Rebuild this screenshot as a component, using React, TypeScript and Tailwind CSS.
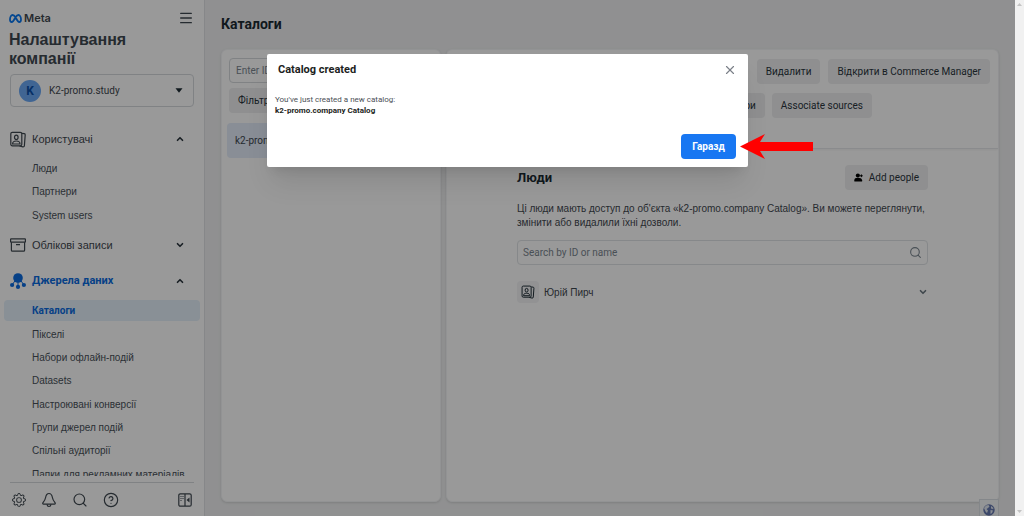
import { useState } from "react";
import type { ReactNode } from "react";
import { BsGear } from "react-icons/bs";
import { ChevronDown, ChevronUp, CircleHelp, Menu, Search, X } from "lucide-react";

interface NavItem {
  label: string;
  active?: boolean;
}

const userItems: NavItem[] = [
  { label: "Люди" },
  { label: "Партнери" },
  { label: "System users" },
];

const dataSourceItems: NavItem[] = [
  { label: "Каталоги", active: true },
  { label: "Пікселі" },
  { label: "Набори офлайн-подій" },
  { label: "Datasets" },
  { label: "Настроювані конверсії" },
  { label: "Групи джерел подій" },
  { label: "Спільні аудиторії" },
  { label: "Папки для рекламних матеріалів" },
];

function MetaLogo() {
  return (
    <svg viewBox="0 0 26 18" className="h-[9px] w-[13px]" fill="none" aria-hidden="true">
      <path
        d="M13 6.5C11 3.5 9.3 2 7.3 2 4.2 2 2 6.6 2 11c0 3 1.200 5 3.400 5 2.300 0 3.900-2.200 7.600-9.500C15 3.500 16.700 2 18.700 2 21.800 2 24 6.600 24 11c0 3-1.200 5-3.400 5-2.300 0-3.900-2.200-7.600-9.500Z"
        stroke="#0a78f0"
        strokeWidth="3.6"
        strokeLinejoin="round"
      />
    </svg>
  );
}

function PeopleCardsIcon({ className }: { className: string }) {
  return (
    <svg viewBox="0 0 16 17" className={className} fill="none" stroke="currentColor" strokeWidth="1.2" aria-hidden="true">
      <rect x="0.8" y="1.300" width="11" height="13.500" rx="1.500" />
      <path d="M12 2.300l2.200.3a1.200 1.200 0 0 1 1 1.300l-.8 10.800a1.300 1.300 0 0 1-1.500 1.200L9.500 15" />
      <ellipse cx="6.300" cy="6.300" rx="1.800" ry="2.200" />
      <path d="M2.600 13c0-2.200 1.200-3 3.700-3s3.700.8 3.700 3Z" />
    </svg>
  );
}

function ArchiveIcon() {
  return (
    <svg viewBox="0 0 16 14" className="h-3.5 w-4" fill="none" stroke="currentColor" strokeWidth="1.2" aria-hidden="true">
      <rect x="0.6" y="0.8" width="14.800" height="3.400" rx="0.500" />
      <path d="M1.400 4.200v8a1 1 0 0 0 1 1h11.200a1 1 0 0 0 1-1v-8M6 6.700h4" />
    </svg>
  );
}

function ClusterIcon() {
  return (
    <svg viewBox="0 0 16 16" className="size-4" fill="currentColor" aria-hidden="true">
      <circle cx="8" cy="5" r="4.800" />
      <circle cx="2.100" cy="12" r="2.100" />
      <circle cx="8" cy="13.900" r="2.100" />
      <circle cx="13.900" cy="12" r="2.100" />
      <path d="M5.500 7 2.100 12M8 8v6M10.500 7l3.400 5" fill="none" stroke="currentColor" strokeWidth="1" />
    </svg>
  );
}

function BellIcon() {
  return (
    <svg viewBox="0 0 16 16" className="size-4" fill="none" stroke="currentColor" strokeWidth="1.200" strokeLinejoin="round" aria-hidden="true">
      <path d="M8 1.500c-2 0-3 1.700-3.400 4-.4 2.500-1.300 3.600-2.600 5.200-.6.800-.2 1.500.6 1.500h10.800c.8 0 1.200-.7.600-1.500-1.300-1.600-2.200-2.700-2.600-5.200-.4-2.300-1.400-4-3.400-4Z" />
      <path d="M6 12.400c.2 1.500.9 2.100 2 2.100s1.800-.6 2-2.100" />
    </svg>
  );
}

function PanelIcon() {
  return (
    <svg viewBox="0 0 14 14" className="size-3.5" fill="none" stroke="currentColor" strokeWidth="1.200" aria-hidden="true">
      <rect x="0.800" y="0.800" width="12.400" height="12.400" rx="1.500" />
      <path d="M7 1v12M2.500 3.500h1M4.500 3.500h1M2.500 5.500h1M4.500 5.500h1M2.500 7.500h1" />
      <path d="M11.500 4.500v5L8.500 7Z" fill="currentColor" stroke="none" />
    </svg>
  );
}

function AddPersonIcon() {
  return (
    <svg viewBox="0 0 10 10" className="size-[9px]" fill="#000" aria-hidden="true">
      <circle cx="4.300" cy="2.800" r="2.300" />
      <path d="M.4 9.500V8c0-1.700 1.300-2.600 3.900-2.600S8.600 6.300 9 8v1.500Z" />
      <path d="M8.200 1.600v3M6.700 3.100h3" stroke="#000" strokeWidth="1.100" />
    </svg>
  );
}

function GlobeIcon() {
  return (
    <svg viewBox="0 0 12 12" className="size-3" aria-hidden="true">
      <circle cx="6" cy="6" r="5.700" fill="#6478b0" />
      <path d="M1 4 3 1.500 5.500 1l1 1.500L5 4 3.500 5 5 6.500 4 9 2.500 7.500ZM8 2l2.500 2-.5 1-2-.5ZM7.500 6l2.500.5-1 2.500L7.500 10Z" fill="#e3e9f2" />
    </svg>
  );
}

function NavList({ items, className }: { items: NavItem[]; className: string }) {
  return (
    <ul className={`grid auto-rows-fr ${className}`}>
      {items.map((item) => (
        <li key={item.label} className="flex">
          <a
            href="#"
            className={`my-px flex flex-1 items-center rounded pl-7 text-[10px] ${
              item.active
                ? "bg-[#e4f0fb] font-[Roboto,sans-serif] font-bold text-[#0a6be0]"
                : "font-['Liberation_Sans',sans-serif] text-[#495159]"
            }`}
          >
            {item.label}
          </a>
        </li>
      ))}
    </ul>
  );
}

interface SectionProps {
  icon: ReactNode;
  label: string;
  open?: boolean;
  active?: boolean;
}

function SectionButton({ icon, label, open, active }: SectionProps) {
  const Chevron = open ? ChevronUp : ChevronDown;
  return (
    <button
      type="button"
      aria-expanded={!!open}
      className={`flex h-6 w-full shrink-0 items-center gap-1.5 pr-[15px] pl-1.5 text-left ${
        active
          ? "text-[11px] font-bold text-[#0a6be0]"
          : "font-['Liberation_Sans',sans-serif] text-[11px] text-[#3f4850]"
      }`}
    >
      {icon}
      <span className="flex-1">{label}</span>
      <Chevron className="size-2.5 text-[#2b353d]" strokeWidth={4} />
    </button>
  );
}

function Sidebar() {
  return (
    <aside className="flex w-[205px] shrink-0 flex-col border-r border-[#e0e2e5] bg-white text-[#3f4850]">
      <div className="flex items-center justify-between pt-2.5 pr-2.5 pl-[9px]">
        <div className="flex items-center gap-0.5">
          <MetaLogo />
          <span className="font-[Inter,sans-serif] text-[11px] leading-4 font-semibold">Meta</span>
        </div>
        <button type="button" aria-label="Меню">
          <Menu className="size-4" strokeWidth={2} />
        </button>
      </div>
      <h1 className="mt-1 px-[9px] font-['Liberation_Sans',sans-serif] text-base leading-[19px] font-bold">
        Налаштування компанії
      </h1>
      <button
        type="button"
        className="mx-2.5 mt-1.5 flex h-[33px] shrink-0 items-center gap-2 rounded-sm border border-[#d5d9dd] px-2 text-left text-[10px]"
      >
        <span className="flex size-[22px] items-center justify-center rounded-full bg-[#6ba8f5] text-xs font-bold text-[#0a4fa8]">
          K
        </span>
        <span className="flex-1">K2-promo.study</span>
        <svg viewBox="0 0 8 5" className="mr-0.5 h-[5px] w-2" fill="#1c2b33" aria-hidden="true">
          <path d="M.5.300h7L4 4.700Z" />
        </svg>
      </button>
      <nav className="mt-5 flex min-h-0 flex-1 flex-col overflow-hidden px-1">
        <SectionButton icon={<PeopleCardsIcon className="h-[17px] w-4" />} label="Користувачі" open />
        <NavList items={userItems} className="mt-1.5 h-[70px] shrink-0" />
        <div className="mt-1.5">
          <SectionButton icon={<ArchiveIcon />} label="Облікові записи" />
        </div>
        <div className="mt-3">
          <SectionButton icon={<ClusterIcon />} label="Джерела даних" open active />
        </div>
        <NavList items={dataSourceItems} className="mt-1.5 h-[187px] shrink-0" />
      </nav>
      <div className="mx-2.5 mt-1.5 flex h-[34px] shrink-0 items-center gap-[15px] border-t border-[#d5d9dd] px-0.5">
        <button type="button" aria-label="Налаштування">
          <BsGear className="size-3.5" />
        </button>
        <button type="button" aria-label="Сповіщення">
          <BellIcon />
        </button>
        <button type="button" aria-label="Пошук">
          <Search className="size-4" strokeWidth={1.75} />
        </button>
        <button type="button" aria-label="Довідка">
          <CircleHelp className="size-4" strokeWidth={1.75} />
        </button>
        <button type="button" aria-label="Згорнути панель" className="ml-auto">
          <PanelIcon />
        </button>
      </div>
    </aside>
  );
}

function GrayButton({ children }: { children: ReactNode }) {
  return (
    <button
      type="button"
      className="flex h-[25px] items-center gap-1.5 rounded bg-[#eeeff0] px-[9px] text-[10px] whitespace-nowrap text-[#2b353d]"
    >
      {children}
    </button>
  );
}

function CatalogList() {
  return (
    <section className="w-[220px] shrink-0 rounded-md border border-[#f4f5f7] bg-white px-[5px] pt-2 shadow-sm">
      <input
        type="text"
        aria-label="Enter ID or name"
        placeholder="Enter ID or name"
        className="mx-0.5 block h-[25px] w-[140px] rounded border border-[#d5d9dd] px-1.5 text-[10px] placeholder:text-[#7b8690]"
      />
      <div className="mx-0.5 mt-[5px] flex">
        <button
          type="button"
          className="h-[25px] rounded bg-[#eeeff0] px-[9px] text-[10px] text-[#2b353d]"
        >
          Фільтри
        </button>
      </div>
      <a
        href="#"
        className="mt-2.5 flex h-[35px] items-center rounded bg-[#e4edfa] px-2 text-[10px] text-[#3f4850]"
      >
        k2-promo.company Catalog
      </a>
    </section>
  );
}

function CatalogDetails() {
  return (
    <section className="min-w-0 flex-1 rounded-md border border-[#f4f5f7] bg-white shadow-sm">
      <div className="h-[99px] border-b border-[#e6e8eb] pt-[9px] pr-2 shadow-xs">
        <div className="ml-auto flex w-[346px] flex-wrap gap-x-[7px] gap-y-[9px]">
          <div className="flex w-full justify-end gap-2">
            <GrayButton>Видалити</GrayButton>
            <GrayButton>Відкрити в Commerce Manager</GrayButton>
          </div>
          <GrayButton>Призначити партнери</GrayButton>
          <GrayButton>Associate sources</GrayButton>
        </div>
      </div>
      <div className="px-[70px] pt-4 text-[#3f4850]">
        <div className="flex items-center justify-between">
          <h2 className="text-[13px] font-bold text-[#1c2b33]">Люди</h2>
          <GrayButton>
            <AddPersonIcon />
            Add people
          </GrayButton>
        </div>
        <p className="mt-3 font-['Liberation_Sans',sans-serif] text-[10px] leading-[14px]">
          Ці люди мають доступ до об'єкта «k2-promo.company Catalog». Ви можете переглянути,
          змінити або видалили їхні дозволи.
        </p>
        <div className="mt-2.5 flex h-[25px] items-center rounded border border-[#e0e3e6] px-[5px]">
          <input
            type="text"
            aria-label="Search by ID or name"
            placeholder="Search by ID or name"
            className="min-w-0 flex-1 text-[10px] placeholder:text-[#7b8690]"
          />
          <Search className="size-[13px] text-[#7b8690]" strokeWidth={2} />
        </div>
        <button type="button" className="mt-4 flex h-[22px] w-full items-center gap-[5px] text-left text-[10px]">
          <span className="flex size-[22px] items-center justify-center rounded bg-[#f3f4f6] text-[#1c2b33]">
            <PeopleCardsIcon className="size-3.5" />
          </span>
          <span className="flex-1 font-['Liberation_Sans',sans-serif]">Юрій Пирч</span>
          <ChevronDown className="size-2.5 text-[#6b7780]" strokeWidth={4} />
        </button>
      </div>
    </section>
  );
}

function CreatedDialog({ onClose }: { onClose: () => void }) {
  return (
    <div className="absolute inset-0 flex items-start justify-center bg-black/40 pt-[54px]">
      <div
        role="dialog"
        aria-modal="true"
        aria-labelledby="dialog-title"
        className="relative w-[481px] rounded-xs bg-white p-2 text-[#1c1e21] shadow-xl"
      >
        <div className="flex items-center justify-between pr-[3px] pl-[3px]">
          <h2 id="dialog-title" className="text-[11px] leading-4 font-bold">
            Catalog created
          </h2>
          <button type="button" aria-label="Закрити" onClick={onClose}>
            <X className="size-3.5 text-[#7b8088]" strokeWidth={2} />
          </button>
        </div>
        <p className="mt-4 text-[8px] leading-[11px] text-[#4b4f56]">
          You've just created a new catalog:
          <strong className="block text-[#1c1e21]">k2-promo.company Catalog</strong>
        </p>
        <div className="mt-[18px] flex justify-end pr-1">
          <div className="relative">
            <button
              type="button"
              onClick={onClose}
              className="block h-[25px] w-[55px] rounded bg-[#1877f2] text-[10px] font-bold text-white"
            >
              Гаразд
            </button>
            <svg viewBox="0 0 73 26" className="absolute top-0 left-full ml-1 h-[26px] w-[73px]" aria-hidden="true">
              <path d="M0 12.500 25 0 20 8h53v9H20l5 8Z" fill="#f00" />
            </svg>
          </div>
        </div>
      </div>
    </div>
  );
}

export default function App() {
  const [dialogOpen, setDialogOpen] = useState(true);

  return (
    <div className="flex h-screen overflow-hidden font-[Roboto,sans-serif]">
      <div className="relative flex min-w-0 flex-1">
        <Sidebar />
        <main className="flex min-w-0 flex-1 flex-col bg-[#f0f1f2] pr-4 pl-4">
          <h1 className="pt-[14px] text-sm leading-5 font-bold text-[#1c2b33]">Каталоги</h1>
          <div className="mt-[15px] flex min-h-0 flex-1 gap-[5px]">
            <CatalogList />
            <CatalogDetails />
          </div>
          <div className="h-3.5 shrink-0" />
        </main>
        <button
          type="button"
          aria-label="Мова"
          className="absolute right-4 bottom-0 flex h-[17px] w-5 items-center justify-center border border-b-0 border-[#dde1e6] bg-[#f6f8fa] pt-1"
        >
          <GlobeIcon />
        </button>
        {dialogOpen && <CreatedDialog onClose={() => setDialogOpen(false)} />}
      </div>
      <div className="flex w-[9px] shrink-0 flex-col items-center justify-between bg-[#f1f1f1] py-[3px] text-[#c4c4c4]">
        <svg viewBox="0 0 5 3" className="h-[3px] w-[5px]" fill="currentColor" aria-hidden="true">
          <path d="M0 3 2.500 0 5 3Z" />
        </svg>
        <svg viewBox="0 0 5 3" className="h-[3px] w-[5px]" fill="currentColor" aria-hidden="true">
          <path d="M0 0h5L2.500 3Z" />
        </svg>
      </div>
    </div>
  );
}
